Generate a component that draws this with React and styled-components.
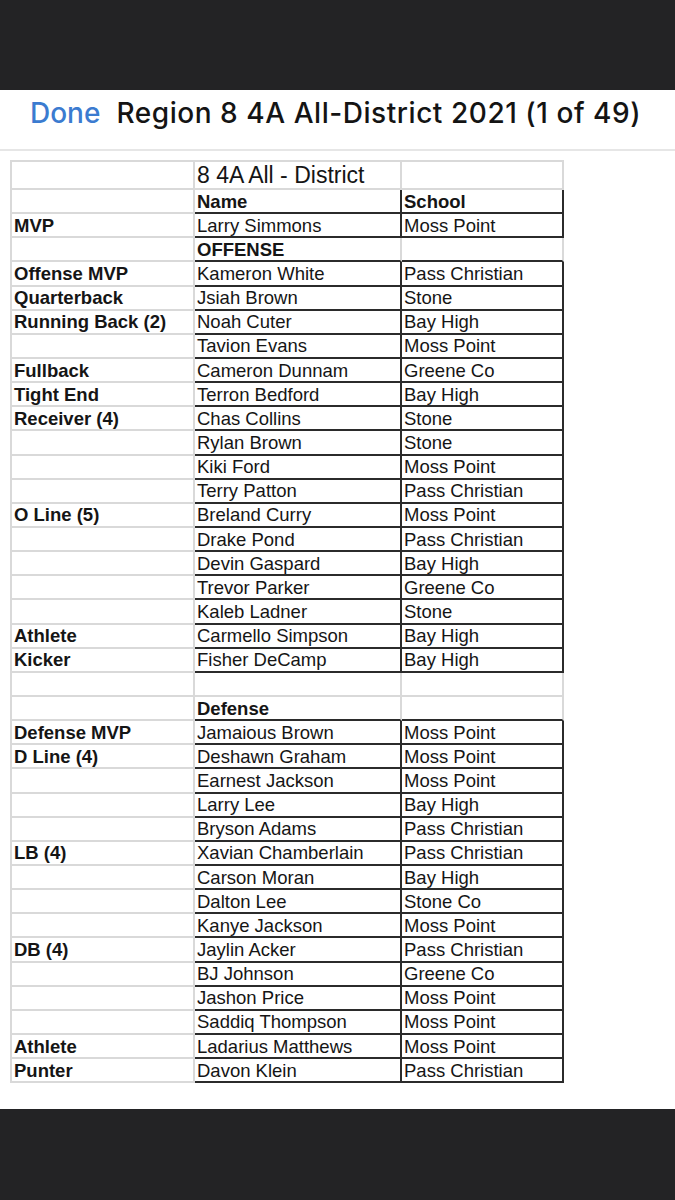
import React from "react";
import styled, { createGlobalStyle } from "styled-components";

const GlobalStyle = createGlobalStyle`
  html, body {
    margin: 0;
    padding: 0;
    background: #ffffff;
  }
  body {
    font-family: "Liberation Sans", Arial, sans-serif;
  }
`;

const LIGHT = "#d9d9d9";
const DARK = "#2b2b2b";

const Page = styled.div`
  width: 675px;
  height: 1200px;
  display: flex;
  flex-direction: column;
  background: #ffffff;
  overflow: hidden;
`;

const DarkBar = styled.div`
  height: ${(p) => p.$h}px;
  flex: none;
  background: #232325;
`;

const Header = styled.div`
  height: 61px;
  flex: none;
  display: flex;
  align-items: center;
  gap: 16px;
  padding: 0 0 14px 30px;
  box-sizing: border-box;
  border-bottom: 2px solid #e6e6e6;
  font-family: Inter, "Liberation Sans", Arial, sans-serif;
  font-size: 28px;
  font-weight: 500;
`;

const DoneButton = styled.span`
  color: #3b7bd0;
`;

const Title = styled.span`
  color: #141414;
  letter-spacing: 0.55px;
`;

const Body = styled.div`
  flex: 1;
  padding: 9px 0 0 10px;
`;

const Table = styled.div`
  display: grid;
  grid-template-columns: 183px 207px 162px;
  grid-template-rows: 28px;
  grid-auto-rows: 24.15px;
  width: max-content;
  border-top: 2px solid ${LIGHT};
  border-left: 2px solid ${LIGHT};
`;

const Cell = styled.div`
  box-sizing: border-box;
  display: flex;
  align-items: center;
  padding: 1px 0 0 2px;
  white-space: nowrap;
  overflow: hidden;
  color: #151515;
  font-size: ${(p) => (p.$big ? "23px" : "18.5px")};
  font-weight: ${(p) => (p.$bold ? 700 : 400)};
  border-right: 2px solid ${(p) => (p.$darkRight ? DARK : LIGHT)};
  border-bottom: 2px solid ${(p) => (p.$darkBottom ? DARK : LIGHT)};
`;

const rows = [
  { kind: "title", cells: ["", "8 4A All - District", ""] },
  { kind: "header", cells: ["", "Name", "School"] },
  { kind: "data", cells: ["MVP", "Larry Simmons", "Moss Point"] },
  { kind: "section", cells: ["", "OFFENSE", ""] },
  { kind: "data", cells: ["Offense MVP", "Kameron White", "Pass Christian"] },
  { kind: "data", cells: ["Quarterback", "Jsiah Brown", "Stone"] },
  { kind: "data", cells: ["Running Back (2)", "Noah Cuter", "Bay High"] },
  { kind: "data", cells: ["", "Tavion Evans", "Moss Point"] },
  { kind: "data", cells: ["Fullback", "Cameron Dunnam", "Greene Co"] },
  { kind: "data", cells: ["Tight End", "Terron Bedford", "Bay High"] },
  { kind: "data", cells: ["Receiver (4)", "Chas Collins", "Stone"] },
  { kind: "data", cells: ["", "Rylan Brown", "Stone"] },
  { kind: "data", cells: ["", "Kiki Ford", "Moss Point"] },
  { kind: "data", cells: ["", "Terry Patton", "Pass Christian"] },
  { kind: "data", cells: ["O Line (5)", "Breland Curry", "Moss Point"] },
  { kind: "data", cells: ["", "Drake Pond", "Pass Christian"] },
  { kind: "data", cells: ["", "Devin Gaspard", "Bay High"] },
  { kind: "data", cells: ["", "Trevor Parker", "Greene Co"] },
  { kind: "data", cells: ["", "Kaleb Ladner", "Stone"] },
  { kind: "data", cells: ["Athlete", "Carmello Simpson", "Bay High"] },
  { kind: "data", cells: ["Kicker", "Fisher DeCamp", "Bay High"] },
  { kind: "blank", cells: ["", "", ""] },
  { kind: "section", cells: ["", "Defense", ""] },
  { kind: "data", cells: ["Defense MVP", "Jamaious Brown", "Moss Point"] },
  { kind: "data", cells: ["D Line (4)", "Deshawn Graham", "Moss Point"] },
  { kind: "data", cells: ["", "Earnest Jackson", "Moss Point"] },
  { kind: "data", cells: ["", "Larry Lee", "Bay High"] },
  { kind: "data", cells: ["", "Bryson Adams", "Pass Christian"] },
  { kind: "data", cells: ["LB (4)", "Xavian Chamberlain", "Pass Christian"] },
  { kind: "data", cells: ["", "Carson Moran", "Bay High"] },
  { kind: "data", cells: ["", "Dalton Lee", "Stone Co"] },
  { kind: "data", cells: ["", "Kanye Jackson", "Moss Point"] },
  { kind: "data", cells: ["DB (4)", "Jaylin Acker", "Pass Christian"] },
  { kind: "data", cells: ["", "BJ Johnson", "Greene Co"] },
  { kind: "data", cells: ["", "Jashon Price", "Moss Point"] },
  { kind: "data", cells: ["", "Saddiq Thompson", "Moss Point"] },
  { kind: "data", cells: ["Athlete", "Ladarius Matthews", "Moss Point"] },
  { kind: "data", cells: ["Punter", "Davon Klein", "Pass Christian"] },
];

function renderRow(row, i) {
  const boxed = row.kind === "header" || row.kind === "data";
  const darkBottom = boxed || row.kind === "section";
  const [pos, name, school] = row.cells;
  return (
    <React.Fragment key={i}>
      <Cell $bold>{pos}</Cell>
      <Cell
        $big={row.kind === "title"}
        $bold={row.kind === "header" || row.kind === "section"}
        $darkRight={boxed}
        $darkBottom={darkBottom}
      >
        {name}
      </Cell>
      <Cell
        $bold={row.kind === "header"}
        $darkRight={boxed}
        $darkBottom={darkBottom}
      >
        {school}
      </Cell>
    </React.Fragment>
  );
}

export default function App() {
  return (
    <Page>
      <GlobalStyle />
      <DarkBar $h={90} />
      <Header>
        <DoneButton>Done</DoneButton>
        <Title>Region 8 4A All-District 2021 (1 of 49)</Title>
      </Header>
      <Body>
        <Table>{rows.map(renderRow)}</Table>
      </Body>
      <DarkBar $h={91} />
    </Page>
  );
}
